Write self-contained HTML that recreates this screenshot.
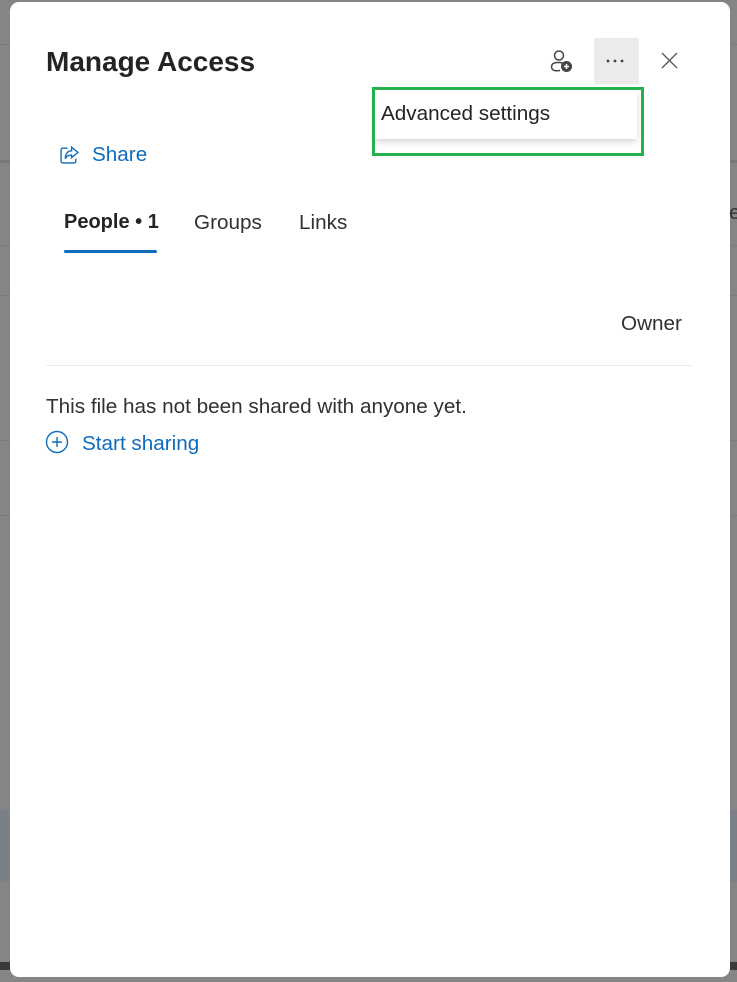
<!DOCTYPE html>
<html><head><meta charset="utf-8"><style>
html,body{margin:0;padding:0;width:737px;height:982px;overflow:hidden;background:#858585;font-family:"Segoe UI","Liberation Sans",sans-serif;}
.bgline{position:absolute;left:0;right:0;height:1px;background:#7a7a7a;}
.dlg{position:absolute;left:10px;top:2px;width:720px;height:975px;background:#fff;border-radius:9px;}
.title{position:absolute;left:46px;top:46px;font-size:28px;font-weight:600;color:#252423;}
.t{position:absolute;white-space:nowrap;font-size:20.7px;}
</style></head><body>
<div class="bgline" style="top:44px"></div>
<div class="bgline" style="top:160px;height:3px;background:#777"></div>
<div class="bgline" style="top:245px"></div>
<div class="bgline" style="top:295px"></div>
<div class="bgline" style="top:440px"></div>
<div class="bgline" style="top:515px"></div>
<div style="position:absolute;left:0;right:0;top:810px;height:72px;background:#7b8087"></div>
<div style="position:absolute;left:0;right:0;top:962px;height:8px;background:#3a3a3a"></div>
<div class="dlg"></div>
<div class="title">Manage Access</div>
<svg style="position:absolute;left:549px;top:49px" width="26" height="26" viewBox="0 0 26 26" fill="none" stroke="#444" stroke-width="1.5">
<circle cx="10" cy="6.5" r="4.5"/><path d="M13.5 14 C11 13.3 5 13 3.2 15.5 C2 17.5 2.5 21 5.5 21.5 C7 21.8 9 21.8 11 21.5"/>
<circle cx="17.5" cy="17.5" r="5.5" fill="#444" stroke="none"/><path d="M17.5 15v5M15 17.5h5" stroke="#fff" stroke-width="1.5"/></svg>
<div style="position:absolute;left:594px;top:38px;width:45px;height:46px;background:#edebe9;border-radius:2px"></div>
<svg style="position:absolute;left:605px;top:58px" width="20" height="6" viewBox="0 0 20 6" fill="#444"><circle cx="3" cy="3" r="1.4"/><circle cx="10" cy="3" r="1.4"/><circle cx="17" cy="3" r="1.4"/></svg>
<svg style="position:absolute;left:661px;top:52px" width="17" height="17" viewBox="0 0 17 17" stroke="#555" stroke-width="1.3"><path d="M1 1L16 16M16 1L1 16"/></svg>
<div style="position:absolute;left:375px;top:90px;width:262px;height:49px;background:#fff;box-shadow:0 3px 6px rgba(0,0,0,0.16)"></div>
<div class="t" style="left:381px;top:102px;color:#252423">Advanced settings</div>
<div style="position:absolute;left:372px;top:87px;width:266px;height:63px;border:3px solid #22b14c"></div>
<svg style="position:absolute;left:59px;top:144px" width="21" height="21" viewBox="0 0 20 20" fill="none" stroke="#0f6cbd" stroke-width="1.3"><path d="M8 4H3.5a1.5 1.5 0 0 0-1.5 1.5v11A1.5 1.5 0 0 0 3.5 18h11a1.5 1.5 0 0 0 1.5-1.5V14"/><path d="M12 3l6 5-6 5V10.5C9 10.5 7 11.5 6 14c0-5 2.5-7.5 6-7.5z"/></svg>
<div class="t" style="left:92px;top:143px;color:#0f6cbd">Share</div>
<div class="t" style="left:64px;top:211px;font-size:20px;font-weight:600;color:#252423">People • 1</div>
<div class="t" style="left:194px;top:211px;color:#323130">Groups</div>
<div class="t" style="left:299px;top:211px;color:#323130">Links</div>
<div style="position:absolute;left:64px;top:250px;width:93px;height:3px;border-radius:2px;background:#0f6cbd"></div>
<div class="t" style="left:621px;top:312px;color:#323130">Owner</div>
<div style="position:absolute;left:46px;top:365px;width:647px;height:1px;background:#edebe9"></div>
<div class="t" style="left:46px;top:395px;color:#323130">This file has not been shared with anyone yet.</div>
<svg style="position:absolute;left:45px;top:430px" width="24" height="24" viewBox="0 0 24 24" fill="none" stroke="#0f6cbd" stroke-width="1.4"><circle cx="12" cy="12" r="10.5"/><path d="M12 7v10M7 12h10"/></svg>
<div class="t" style="left:82px;top:432px;color:#0f6cbd">Start sharing</div>
<div class="t" style="left:729px;top:201px;color:#333">e</div>
</body></html>
